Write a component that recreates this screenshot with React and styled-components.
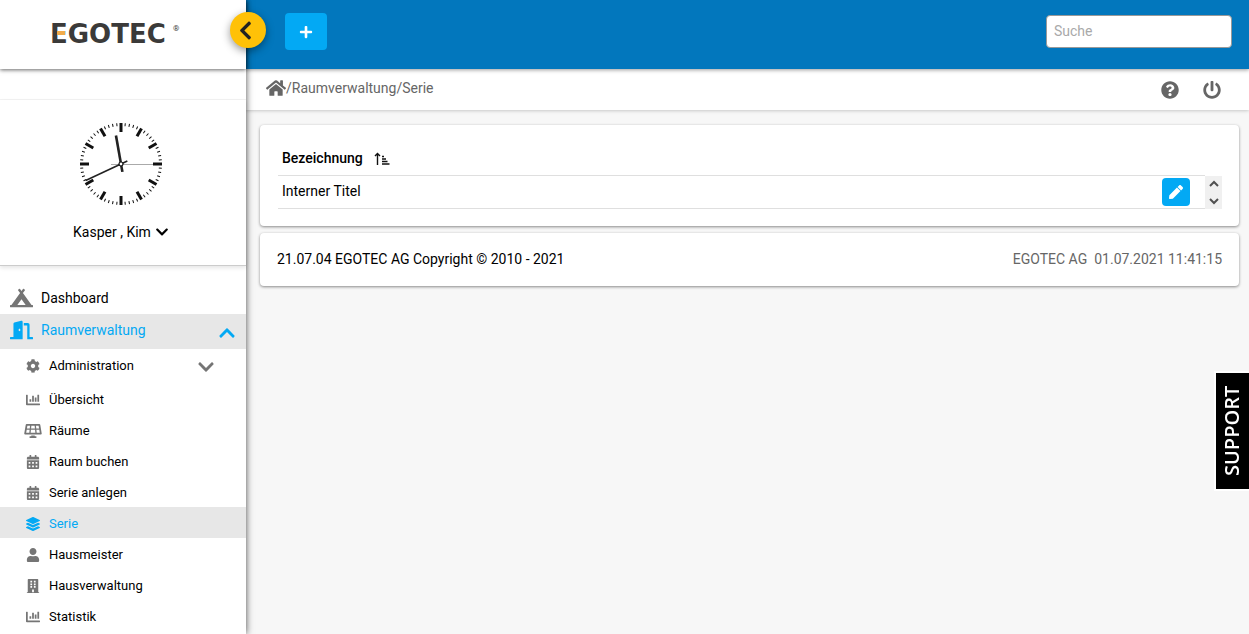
import styled, { createGlobalStyle } from 'styled-components';
import {
  FaCampground,
  FaDoorOpen,
  FaCog,
  FaChartBar,
  FaSolarPanel,
  FaCalendarAlt,
  FaLayerGroup,
  FaUser,
  FaBuilding,
  FaHome,
  FaQuestionCircle,
  FaPowerOff,
  FaPen,
  FaPlus,
  FaChevronDown,
  FaChevronUp,
  FaChevronLeft,
} from 'react-icons/fa';

const subItems = [
  { label: 'Übersicht', icon: FaChartBar },
  { label: 'Räume', icon: FaSolarPanel },
  { label: 'Raum buchen', icon: FaCalendarAlt },
  { label: 'Serie anlegen', icon: FaCalendarAlt },
  { label: 'Serie', icon: FaLayerGroup, active: true },
  { label: 'Hausmeister', icon: FaUser },
  { label: 'Hausverwaltung', icon: FaBuilding },
  { label: 'Statistik', icon: FaChartBar },
];

const Logo = () => (
  <LogoSvg width="134" height="26" viewBox="0 0 134 26" role="img" aria-label="EGOTEC">
    <text x="-2" y="21" fontFamily="DejaVu Sans" fontWeight="700" fontSize="26" fill="#3b3a39">EGOTEC</text>
    <rect x="5" y="9" width="8" height="4" fill="#f0ab4b" />
    <text x="121" y="9" fontFamily="Roboto" fontSize="8" fill="#3b3a39">®</text>
  </LogoSvg>
);

const Clock = () => {
  const ticks = Array.from({ length: 60 }, (_, i) => i);
  return (
    <svg width="84" height="84" viewBox="-42 -42 84 84" role="img" aria-label="Uhr">
      {ticks.map((i) => (
        <line
          key={i}
          y1="-41"
          y2={i % 5 ? -38 : -32}
          stroke="#111"
          strokeWidth={i % 5 ? 1 : 3}
          transform={`rotate(${i * 6})`}
        />
      ))}
      <line x1="-10" x2="32" y1="0.5" y2="0.5" stroke="#aaa" strokeWidth="1" />
      <line y1="8" y2="-29" stroke="#222" strokeWidth="2.6" transform="rotate(-10)" />
      <line y1="7" y2="-39" stroke="#222" strokeWidth="1.6" transform="rotate(-115)" />
      <circle r="2" fill="#fff" stroke="#111" strokeWidth="1.2" />
    </svg>
  );
};

const SortIcon = () => (
  <svg width="16" height="14" viewBox="0 0 16 14" fill="none" stroke="#111">
    <path d="M3.5 13 V1.5 M1 4 L3.5 1.5 L6 4" strokeWidth="1.4" />
    <path d="M8 4.5 H10 M8 7 H12 M8 9.5 H13.5 M8 12 H15.5" strokeWidth="1.4" />
  </svg>
);

const ScrollArrow = ({ d }) => (
  <svg width="10" height="8" viewBox="0 0 10 8">
    <path d={d} fill="none" stroke="#505050" strokeWidth="2" />
  </svg>
);

const App = () => {
  return (
    <Page>
      <GlobalStyle />
      <Sidebar>
        <LogoBar>
          <Logo />
          <Collapse type="button" aria-label="Menü einklappen">
            <FaChevronLeft size={21} />
          </Collapse>
        </LogoBar>
        <Strip />
        <Profile>
          <Clock />
          <UserButton type="button">
            Kasper , Kim <FaChevronDown size={14} />
          </UserButton>
        </Profile>
        <Nav>
          <MainLink href="#dashboard">
            <FaCampground size={20} />
            Dashboard
          </MainLink>
          <MainLink href="#raumverwaltung" $active>
            <FaDoorOpen size={20} />
            Raumverwaltung
            <Arrow size={18} />
          </MainLink>
          <GroupLink href="#administration">
            <FaCog size={14} />
            Administration
            <FaChevronDown className="arrow" size={18} />
          </GroupLink>
          {subItems.map(({ label, icon: Icon, active }) => (
            <SubLink key={label} href="#" $active={active}>
              <Icon size={14} />
              {label}
            </SubLink>
          ))}
        </Nav>
      </Sidebar>
      <Main>
        <TopBar>
          <AddButton type="button" aria-label="Neu">
            <FaPlus size={14} />
          </AddButton>
          <Search type="search" placeholder="Suche" aria-label="Suche" />
        </TopBar>
        <Crumbs>
          <Path>
            <a href="#home" aria-label="Start"><FaHome size={20} /></a>
            <span>/</span>
            <a href="#raumverwaltung">Raumverwaltung</a>
            <span>/</span>
            <a href="#serie">Serie</a>
          </Path>
          <Tools>
            <IconButton type="button" aria-label="Hilfe"><FaQuestionCircle size={18} /></IconButton>
            <IconButton type="button" aria-label="Abmelden"><FaPowerOff size={18} /></IconButton>
          </Tools>
        </Crumbs>
        <Content>
          <ListCard>
            <Table>
              <thead>
                <tr>
                  <th>
                    Bezeichnung <SortIcon />
                  </th>
                  <th aria-label="Aktion" />
                </tr>
              </thead>
              <tbody>
                <tr>
                  <td>Interner Titel</td>
                  <td>
                    <EditButton type="button" aria-label="Bearbeiten">
                      <FaPen size={14} />
                    </EditButton>
                  </td>
                </tr>
              </tbody>
            </Table>
            <Scroller>
              <ScrollButton type="button" aria-label="Nach oben"><ScrollArrow d="M1 6 L5 2 L9 6" /></ScrollButton>
              <ScrollButton type="button" aria-label="Nach unten"><ScrollArrow d="M1 2 L5 6 L9 2" /></ScrollButton>
            </Scroller>
          </ListCard>
          <Footer>
            <span>21.07.04 EGOTEC AG Copyright © 2010 - 2021</span>
            <Stamp>
              <span>EGOTEC AG</span>
              <span>01.07.2021 11:41:15</span>
            </Stamp>
          </Footer>
        </Content>
      </Main>
      <Support type="button">SUPPORT</Support>
    </Page>
  );
};

export default App;

const GlobalStyle = createGlobalStyle`
  * {
    box-sizing: border-box;
  }
  body {
    margin: 0;
    background: #f7f7f7;
    color: #000;
    font-family: Roboto, sans-serif;
    font-size: 14px;
    line-height: 20px;
  }
  button {
    font: inherit;
    color: inherit;
    border: 0;
    padding: 0;
    background: none;
    cursor: pointer;
  }
  a {
    color: inherit;
    text-decoration: none;
  }
  svg {
    flex-shrink: 0;
  }
`;

const Page = styled.div`
  display: flex;
  min-height: 100vh;
`;

const Sidebar = styled.aside`
  position: relative;
  z-index: 2;
  flex: 0 0 246px;
  background: #fff;
  box-shadow: 0 0 7px rgba(0, 0, 0, 0.7);
`;

const LogoBar = styled.div`
  position: relative;
  display: flex;
  align-items: center;
  height: 69px;
  padding-left: 52px;
  background: #fff;
  box-shadow: 0 1px 4px rgba(0, 0, 0, 0.6);
`;

const LogoSvg = styled.svg`
  display: block;
  overflow: visible;
`;

const Collapse = styled.button`
  position: absolute;
  top: 12px;
  right: -20px;
  display: flex;
  align-items: center;
  justify-content: center;
  width: 36px;
  height: 36px;
  padding-right: 6px;
  border-radius: 50%;
  background: #ffc107;
  color: #222;
  box-shadow: 0 3px 8px rgba(0, 0, 0, 0.4);
`;

const Strip = styled.div`
  height: 31px;
  border-bottom: 1px solid #f3f3f3;
`;

const Profile = styled.div`
  display: flex;
  flex-direction: column;
  align-items: center;
  gap: 16px;
  height: 166px;
  padding: 22px 4px 0 0;
  border-bottom: 1px solid #ccc;
  box-shadow: 0 2px 4px rgba(0, 0, 0, 0.1);
`;

const UserButton = styled.button`
  display: flex;
  align-items: center;
  gap: 4px;
`;

const Nav = styled.nav`
  display: flex;
  flex-direction: column;
  padding-top: 16px;
`;

const NavLink = styled.a`
  display: flex;
  align-items: center;
  background: ${({ $active }) => ($active ? '#e7e7e7' : 'transparent')};
  color: ${({ $active }) => ($active ? '#03a9f4' : '#000')};

  svg {
    color: ${({ $active }) => ($active ? '#03a9f4' : '#757575')};
  }
`;

const MainLink = styled(NavLink)`
  gap: 8px;
  height: ${({ $active }) => ($active ? 35 : 32)}px;
  padding: ${({ $active }) => ($active ? '0 10px 3px' : '0 10px')};

  svg:first-child {
    width: 23px;
  }
`;

const Arrow = styled(FaChevronUp)`
  margin: 6px 0 0 auto;
`;

const GroupLink = styled(NavLink)`
  gap: 7px;
  height: 34px;
  padding: 0 31px 0 24px;
  font-size: 13px;

  svg:first-child {
    width: 18px;
  }

  .arrow {
    margin: 2px 0 0 auto;
  }
`;

const SubLink = styled(NavLink)`
  gap: 7px;
  height: 31px;
  padding: 2px 0 0 24px;
  font-size: 13px;

  svg {
    width: 18px;
  }
`;

const Main = styled.main`
  flex: 1;
  min-width: 0;
`;

const TopBar = styled.header`
  position: relative;
  display: flex;
  align-items: center;
  justify-content: space-between;
  height: 69px;
  padding: 0 17px 6px 39px;
  background: #0277bd;
  box-shadow: 0 1px 4px rgba(0, 0, 0, 0.4);
`;

const AddButton = styled.button`
  display: flex;
  align-items: center;
  justify-content: center;
  width: 42px;
  height: 37px;
  border-radius: 4px;
  background: #03a9f4;
  color: #fff;
`;

const Search = styled.input`
  width: 186px;
  height: 33px;
  padding: 0 7px 2px;
  border: 1px solid #999;
  border-radius: 4px;
  background: #fff;
  font: inherit;

  &::placeholder {
    color: #a9a9a9;
  }
`;

const Crumbs = styled.div`
  display: flex;
  align-items: center;
  justify-content: space-between;
  height: 41px;
  padding: 0 28px 0 20px;
  background: #fff;
  color: #666;
  box-shadow: 0 0 4px rgba(0, 0, 0, 0.3);
`;

const Path = styled.div`
  display: flex;
  align-items: center;
  padding-bottom: 4px;

  svg {
    display: block;
  }
`;

const Tools = styled.div`
  display: flex;
  gap: 24px;
`;

const IconButton = styled.button`
  svg {
    display: block;
  }
`;

const Content = styled.div`
  display: flex;
  flex-direction: column;
  gap: 7px;
  padding: 15px 10px 0 14px;
`;

const Card = styled.section`
  display: flex;
  border-radius: 4px;
  background: #fff;
  box-shadow: 0 1px 3px rgba(0, 0, 0, 0.45);
`;

const ListCard = styled(Card)`
  align-items: flex-end;
  padding: 17px 17px 17px 18px;
`;

const Table = styled.table`
  flex: 1;
  border-collapse: collapse;

  th {
    height: 33px;
    padding: 0 4px;
    text-align: left;
    font-weight: 500;
  }

  th svg {
    margin-left: 8px;
    vertical-align: -3px;
  }

  td {
    height: 33px;
    padding: 0 4px;
    border-top: 1px solid #dfdfdf;
    border-bottom: 1px solid #dfdfdf;
  }

  td:first-child {
    padding-bottom: 2px;
  }

  td:last-child {
    width: 47px;
  }
`;

const EditButton = styled.button`
  display: flex;
  align-items: center;
  justify-content: center;
  width: 28px;
  height: 28px;
  border-radius: 4px;
  background: #03a9f4;
  color: #fff;
`;

const Scroller = styled.div`
  display: flex;
  flex-direction: column;
  justify-content: space-between;
  width: 17px;
  height: 33px;
  background: #f0f0f0;
`;

const ScrollButton = styled.button`
  display: flex;
  align-items: center;
  justify-content: center;
  height: 16px;
`;

const Footer = styled(Card)`
  align-items: center;
  justify-content: space-between;
  height: 53px;
  padding: 0 17px;
`;

const Stamp = styled.span`
  display: flex;
  gap: 7px;
  color: #666;
`;

const Support = styled.button`
  position: fixed;
  top: 371px;
  right: 0;
  width: 35px;
  height: 120px;
  border: 2px solid #fff;
  border-left: 0;
  background: #000;
  color: #fff;
  font-family: 'Open Sans', sans-serif;
  font-size: 20px;
  font-weight: 600;
  writing-mode: vertical-rl;
  transform: rotate(180deg);
`;
